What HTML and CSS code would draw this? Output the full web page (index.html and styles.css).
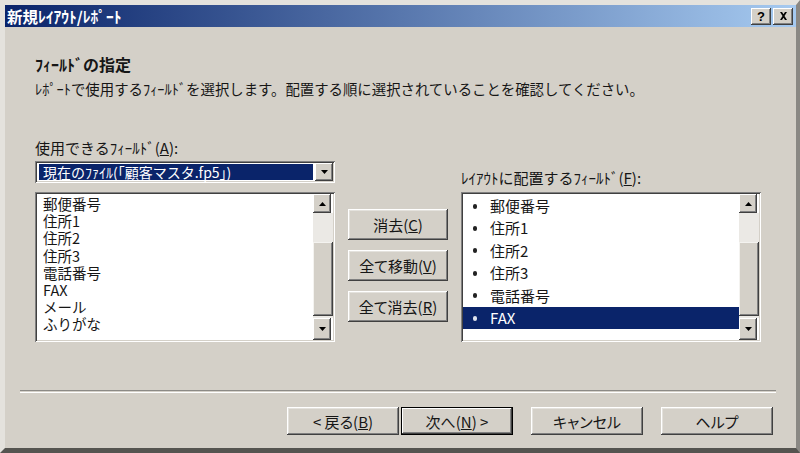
FILE: index.html
```html
<!DOCTYPE html>
<html lang="ja">
<head>
    <meta charset="UTF-8">
    <title>新規ﾚｲｱｳﾄ/ﾚﾎﾟｰﾄ</title>
    <link rel="stylesheet" href="styles.css">
</head>
<body>
    <div class="window">
        <div class="titlebar">
            <span class="title">新規ﾚｲｱｳﾄ/ﾚﾎﾟｰﾄ</span>
            <div class="title-buttons">
                <span class="tbtn help">?</span>
                <span class="tbtn">
                    <svg width="9" height="8" viewBox="0 0 9 8"><path d="M1 0h2l1.5 2.2L6 0h2L5.5 4 8 8H6L4.5 5.8 3 8H1l2.5-4z" fill="#000"/></svg>
                </span>
            </div>
        </div>

        <div class="header">
            <h1>ﾌｨｰﾙﾄﾞの指定</h1>
            <p>ﾚﾎﾟｰﾄで使用するﾌｨｰﾙﾄﾞを選択します。配置する順に選択されていることを確認してください。</p>
        </div>

        <div class="fields">
            <div class="col">
                <label class="label">使用できるﾌｨｰﾙﾄﾞ(<u>A</u>):</label>
                <div class="combo">
                    <span class="combo-value">現在のﾌｧｲﾙ(「顧客マスタ.fp5」)</span>
                    <span class="arrow-btn">
                        <svg width="7" height="4" viewBox="0 0 7 4"><path d="M0 0h7L3.5 4z" fill="#000"/></svg>
                    </span>
                </div>
                <div class="listbox">
                    <ul class="items plain">
                        <li>郵便番号</li>
                        <li>住所1</li>
                        <li>住所2</li>
                        <li>住所3</li>
                        <li>電話番号</li>
                        <li>FAX</li>
                        <li>メール</li>
                        <li>ふりがな</li>
                    </ul>
                    <div class="scrollbar">
                        <span class="arrow-btn up"><svg width="7" height="4" viewBox="0 0 7 4"><path d="M0 4h7L3.5 0z" fill="#000"/></svg></span>
                        <span class="track upper"></span>
                        <span class="thumb"></span>
                        <span class="track lower"></span>
                        <span class="arrow-btn down"><svg width="7" height="4" viewBox="0 0 7 4"><path d="M0 0h7L3.5 4z" fill="#000"/></svg></span>
                    </div>
                </div>
            </div>

            <div class="actions">
                <button class="btn">消去(<u>C</u>)</button>
                <button class="btn">全て移動(<u>V</u>)</button>
                <button class="btn">全て消去(<u>R</u>)</button>
            </div>

            <div class="col">
                <label class="label right-label">ﾚｲｱｳﾄに配置するﾌｨｰﾙﾄﾞ(<u>F</u>):</label>
                <div class="listbox">
                    <ul class="items bulleted">
                        <li>郵便番号</li>
                        <li>住所1</li>
                        <li>住所2</li>
                        <li>住所3</li>
                        <li>電話番号</li>
                        <li class="selected">FAX</li>
                    </ul>
                    <div class="scrollbar">
                        <span class="arrow-btn up"><svg width="7" height="4" viewBox="0 0 7 4"><path d="M0 4h7L3.5 0z" fill="#000"/></svg></span>
                        <span class="track upper"></span>
                        <span class="thumb"></span>
                        <span class="track lower"></span>
                        <span class="arrow-btn down"><svg width="7" height="4" viewBox="0 0 7 4"><path d="M0 0h7L3.5 4z" fill="#000"/></svg></span>
                    </div>
                </div>
            </div>
        </div>

        <div class="separator"></div>

        <div class="footer">
            <button class="btn wide">&lt; 戻る(<u>B</u>)</button>
            <button class="btn wide default">次へ(<u>N</u>) &gt;</button>
            <button class="btn wide gap">キャンセル</button>
            <button class="btn wide gap">ヘルプ</button>
        </div>
    </div>
</body>
</html>
```

FILE: styles.css
```css
body, html {
    margin: 0;
    padding: 0;
    background-color: #d4d0c8;
    font-family: "Noto Sans CJK JP", sans-serif;
    font-size: 15px;
    color: #161616;
}
ul {
    margin: 0;
    padding: 0;
    list-style: none;
}
.window {
    width: 800px;
    height: 453px;
    box-sizing: border-box;
    background-color: #d4d0c8;
    border-top: 5px solid #e4e2dd;
    border-left: 5px solid #e4e2dd;
    border-right: 4px solid #8a8884;
    border-bottom: 5px solid #555450;
    display: flex;
    flex-direction: column;
}
.titlebar {
    height: 22px;
    flex-shrink: 0;
    background: linear-gradient(to right, #0a246a, #a6caf0);
    display: flex;
    align-items: center;
    justify-content: space-between;
    padding: 0 3px 0 2px;
}
.title {
    color: #fff;
    font-weight: bold;
    font-size: 15.5px;
    line-height: 22px;
}
.title-buttons {
    display: flex;
    gap: 2px;
}
.tbtn {
    width: 20px;
    height: 17px;
    background-color: #d4d0c8;
    box-shadow: inset -1px -1px #404040, inset 1px 1px #fff, inset -2px -2px #808080;
    display: flex;
    align-items: center;
    justify-content: center;
    font-family: "Liberation Sans", sans-serif;
    font-weight: bold;
    font-size: 13px;
    color: #000;
}
.header {
    padding: 28px 0 0 30px;
}
.header h1 {
    margin: 0;
    font-size: 16px;
    line-height: 19px;
    font-weight: bold;
}
.header p {
    margin: 6px 0 0;
    font-size: 14.4px;
    line-height: 18px;
}
.fields {
    display: flex;
    align-items: flex-end;
    gap: 13px;
    padding-left: 30px;
    margin-top: 41px;
}
.col {
    width: 300px;
    display: flex;
    flex-direction: column;
}
.label {
    line-height: 18px;
    height: 18px;
}
.right-label {
    margin-bottom: 5px;
}
.combo {
    height: 22px;
    margin: 4px 0 9px;
    box-sizing: border-box;
    padding: 2px;
    background-color: #fff;
    box-shadow: inset 1px 1px #808080, inset -1px -1px #fff, inset 2px 2px #404040, inset -2px -2px #d4d0c8;
    display: flex;
}
.combo-value {
    flex: 1;
    margin: 1px 2px 1px 2px;
    background-color: #0a246a;
    color: #fff;
    padding-left: 4px;
    font-size: 14px;
    line-height: 16px;
    white-space: nowrap;
}
.arrow-btn {
    width: 18px;
    background-color: #d4d0c8;
    box-shadow: inset -1px -1px #404040, inset 1px 1px #fff, inset -2px -2px #808080;
    display: flex;
    align-items: center;
    justify-content: center;
}
.listbox {
    height: 150px;
    box-sizing: border-box;
    padding: 2px;
    background-color: #fff;
    box-shadow: inset 1px 1px #808080, inset -1px -1px #fff, inset 2px 2px #404040, inset -2px -2px #d4d0c8;
    display: flex;
}
.items {
    flex: 1;
}
.plain {
    padding: 1px 0 0 6px;
}
.plain li {
    font-size: 14.5px;
    line-height: 17.2px;
    height: 17.2px;
}
.bulleted {
    padding-top: 1px;
}
.bulleted li {
    height: 22.4px;
    line-height: 22.4px;
    display: flex;
    align-items: center;
    padding-left: 10px;
}
.bulleted li::before {
    content: "";
    width: 4px;
    height: 5px;
    border-radius: 2px;
    background-color: #222;
    margin-right: 13px;
}
.bulleted li.selected {
    background-color: #0a246a;
    color: #fff;
}
.bulleted li.selected::before {
    background-color: #dfe3ee;
}
.scrollbar {
    width: 20px;
    display: flex;
    flex-direction: column;
}
.scrollbar .up {
    height: 19px;
}
.scrollbar .down {
    height: 22px;
}
.track {
    background-color: #ebe9e5;
}
.track.upper {
    height: 29px;
}
.track.lower {
    height: 2px;
}
.thumb {
    height: 74px;
    background-color: #d4d0c8;
    box-shadow: inset -1px -1px #404040, inset 1px 1px #f4f3f0, inset -2px -2px #808080;
}
.actions {
    align-self: flex-start;
    padding-top: 70px;
    width: 100px;
    display: flex;
    flex-direction: column;
    gap: 10px;
}
.btn {
    font-family: "Noto Sans CJK JP", sans-serif;
    font-size: 15px;
    color: #161616;
    background-color: #d4d0c8;
    border: none;
    padding: 0;
    height: 31px;
    font-feature-settings: "palt";
    box-shadow: inset -1px -1px #404040, inset 1px 1px #fff, inset -2px -2px #808080, inset 2px 2px #e4e2dd;
}
.separator {
    margin: 48px 20px 0 15px;
    height: 1px;
    border-top: 1px solid #8c8a86;
    border-bottom: 1px solid #fff;
}
.footer {
    display: flex;
    justify-content: flex-end;
    gap: 2px;
    padding-right: 23px;
    margin-top: 14px;
}
.btn.wide {
    width: 112px;
    height: 28px;
}
.btn.gap {
    margin-left: 16px;
}
.btn.default {
    box-shadow: inset 0 0 0 1px #000, inset -2px -2px #404040, inset 2px 2px #fff, inset -3px -3px #808080;
}
```
